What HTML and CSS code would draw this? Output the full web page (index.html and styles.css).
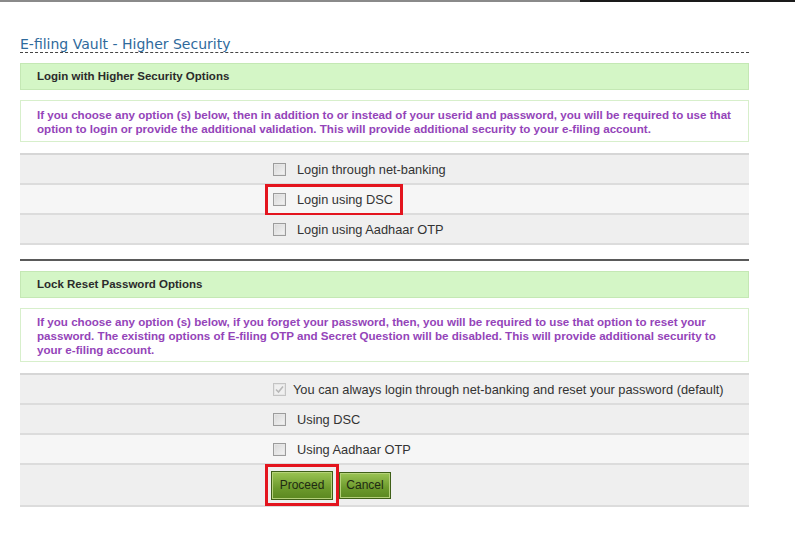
FILE: index.html
```html
<!DOCTYPE html>
<html>
<head>
<meta charset="utf-8">
<link rel="stylesheet" href="styles.css">
</head>
<body>
<div class="topbar"><div class="tb-gray"></div><div class="tb-dark"></div></div>
<div class="page">
  <h1 class="title">E-filing Vault - Higher Security</h1>

  <div class="section-head">Login with Higher Security Options</div>
  <div class="info">If you choose any option (s) below, then in addition to or instead of your userid and password, you will be required to use that<br>option to login or provide the additional validation. This will provide additional security to your e-filing account.</div>

  <div class="opts">
    <div class="row"><span class="cb"></span><span class="lbl">Login through net-banking</span></div>
    <div class="row light"><span class="cb"></span><span class="lbl">Login using DSC</span><span class="hl hl-dsc"></span></div>
    <div class="row"><span class="cb"></span><span class="lbl">Login using Aadhaar OTP</span></div>
  </div>

  <div class="divider"></div>

  <div class="section-head">Lock Reset Password Options</div>
  <div class="info info2">If you choose any option (s) below, if you forget your password, then, you will be required to use that option to reset your<br>password. The existing options of E-filing OTP and Secret Question will be disabled. This will provide additional security to<br>your e-filing account.</div>

  <div class="opts opts2">
    <div class="row"><span class="cb checked"><svg viewBox="0 0 13 13" width="13" height="13"><path d="M3 6.5 L5.5 9 L10 3.5" fill="none" stroke="#b8b8b8" stroke-width="1.6"/></svg></span><span class="lbl lbl-def">You can always login through net-banking and reset your password (default)</span></div>
    <div class="row"><span class="cb"></span><span class="lbl">Using DSC</span></div>
    <div class="row light"><span class="cb"></span><span class="lbl">Using Aadhaar OTP</span></div>
    <div class="row btnrow"><button class="btn btn-proceed">Proceed</button><button class="btn btn-cancel">Cancel</button><span class="hl hl-btn"></span></div>
  </div>
</div>
</body>
</html>
```

FILE: styles.css
```css
html, body {
  margin: 0;
  padding: 0;
  background: #ffffff;
}
body {
  font-family: "Liberation Sans", Arial, sans-serif;
  color: #333;
}
.topbar {
  display: flex;
  height: 2px;
}
.tb-gray {
  width: 580px;
  background: #8a8a8a;
}
.tb-dark {
  width: 215px;
  background: #1a1a1a;
}
.page {
  width: 729px;
  padding-left: 20px;
}
.title {
  margin: 34px 0 0 0;
  font-family: "DejaVu Sans", sans-serif;
  font-weight: normal;
  font-size: 14px;
  line-height: 16px;
  color: #2f6a9c;
  padding-bottom: 0;
  border-bottom: 1px dashed #444;
}
.section-head {
  margin-top: 10px;
  height: 25px;
  line-height: 25px;
  background: #d4f6c6;
  border: 1px solid #c4e8b4;
  padding-left: 16px;
  font-weight: bold;
  font-size: 11.5px;
  color: #2b2b2b;
}
.info {
  margin-top: 10px;
  border: 1px solid #d7efcb;
  padding: 7px 16px 5px 16px;
  font-weight: bold;
  font-size: 11.6px;
  line-height: 14px;
  color: #9444b9;
  white-space: nowrap;
}
.info2 {
  padding: 6px 16px 4px 16px;
}
.opts {
  margin-top: 11px;
  border-top: 2px solid #d6d6d6;
}
.opts2 {
  margin-top: 11px;
}
.divider {
  margin-top: 14px;
  height: 2px;
  background: #5a5a5a;
}
.row {
  position: relative;
  display: flex;
  align-items: center;
  height: 28px;
  padding-left: 253px;
  background: #efefef;
  border-bottom: 2px solid #dcdcdc;
  font-size: 12.8px;
  color: #333;
}
.row.light {
  background: #f6f6f6;
}
.cb {
  width: 11px;
  height: 11px;
  border: 1px solid #9c9c9c;
  background: linear-gradient(135deg, #d8d8d8, #f4f4f4);
  box-shadow: inset 0 0 0 1px #e6e6e6;
  margin-right: 11px;
  display: inline-flex;
  align-items: center;
  justify-content: center;
}
.cb svg {
  display: block;
  margin: -1px;
}
.cb.checked {
  border-color: #c4c4c4;
  background: #f0f0f0;
  margin-right: 7px;
}
.lbl {
  white-space: nowrap;
}
.btnrow {
  height: 40px;
  padding-left: 251px;
  gap: 6px;
}
.btn {
  font-family: "Liberation Sans", Arial, sans-serif;
  font-size: 12px;
  color: #1f2a12;
  border: 1px solid #3f5f18;
  box-shadow: inset 0 0 0 1px #b5d17a;
  background: linear-gradient(#9bc454, #6c9a2c 60%, #5b8820);
  padding: 0;
  height: 27px;
  cursor: pointer;
}
.btn-proceed {
  width: 62px;
  height: 29px;
}
.btn-cancel {
  width: 52px;
}
.hl {
  position: absolute;
  border: 3px solid #e3141e;
  pointer-events: none;
}
.hl-dsc {
  left: 245px;
  top: -1px;
  width: 132px;
  height: 26px;
}
.hl-btn {
  left: 245px;
  top: -1px;
  width: 68px;
  height: 36px;
}
```
